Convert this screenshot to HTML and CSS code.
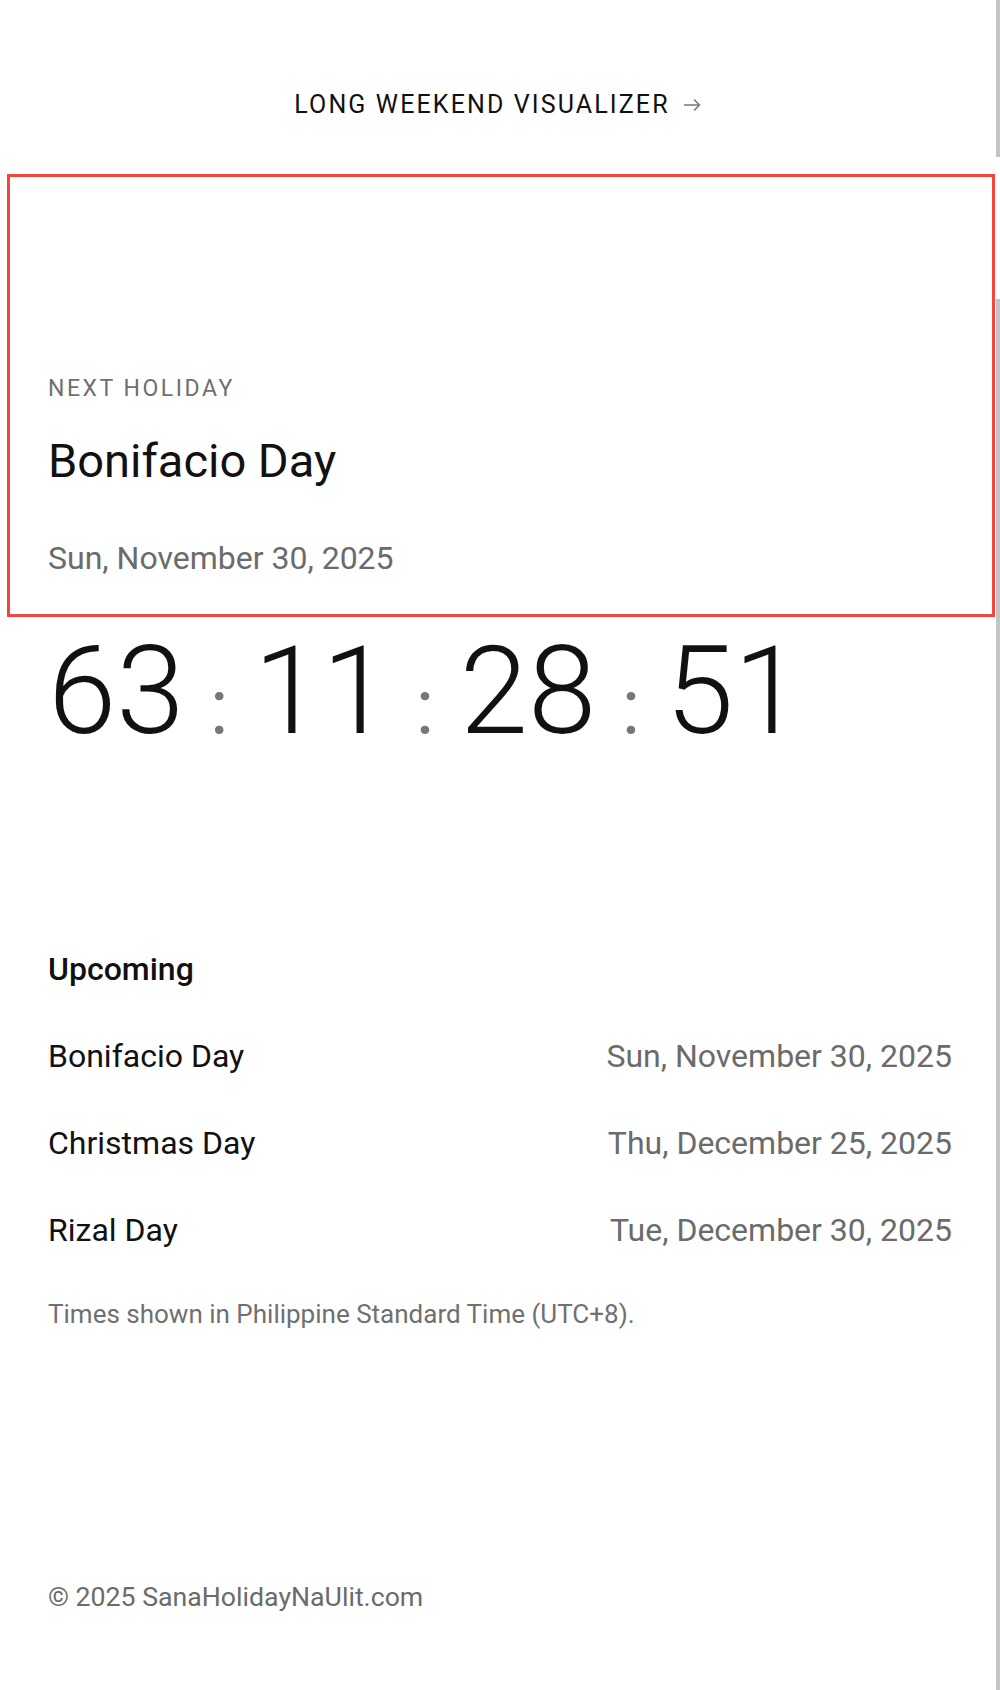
FILE: index.html
```html
<!DOCTYPE html>
<html lang="en">
<head>
<meta charset="utf-8">
<title>Sana Holiday Na Ulit</title>
<link rel="stylesheet" href="styles.css">
</head>
<body>
<div class="edge edge-top"></div>
<div class="edge edge-bottom"></div>
<div class="page">
  <header class="header">
    <a class="visualizer-link" href="#">LONG WEEKEND VISUALIZER
      <svg class="arrow" width="18" height="14" viewBox="0 0 18 14" aria-hidden="true"><path d="M1 7H16.5M11 1.5L16.5 7L11 12.5" fill="none" stroke="#777" stroke-width="1.5"/></svg>
    </a>
  </header>
  <section class="hero">
    <div class="eyebrow">NEXT HOLIDAY</div>
    <h1 class="hero-title">Bonifacio Day</h1>
    <div class="hero-date">Sun, November 30, 2025</div>
  </section>
  <div class="countdown">
    <span class="num">63</span><span class="sep">:</span><span class="num">11</span><span class="sep">:</span><span class="num">28</span><span class="sep">:</span><span class="num">51</span>
  </div>
  <section class="upcoming">
    <h2 class="upcoming-title">Upcoming</h2>
    <ul class="list">
      <li class="row"><span class="name">Bonifacio Day</span><span class="date">Sun, November 30, 2025</span></li>
      <li class="row"><span class="name">Christmas Day</span><span class="date">Thu, December 25, 2025</span></li>
      <li class="row"><span class="name">Rizal Day</span><span class="date">Tue, December 30, 2025</span></li>
    </ul>
    <p class="note">Times shown in Philippine Standard Time (UTC+8).</p>
  </section>
  <footer class="footer">© 2025 SanaHolidayNaUlit.com</footer>
</div>
</body>
</html>
```

FILE: styles.css
```css
html, body {
  margin: 0;
  padding: 0;
  background: #fff;
}
body {
  font-family: Roboto, "Liberation Sans", Arial, sans-serif;
  color: #111;
  min-height: 1690px;
  position: relative;
}
.edge {
  position: absolute;
  right: 0;
  width: 4px;
  background: #c4c4c4;
}
.edge-top { top: 0; height: 157px; }
.edge-bottom { top: 299px; bottom: 0; }

.page {
  padding: 0 48px;
}
.header {
  padding-top: 91px;
  height: 66px;
  display: flex;
  justify-content: center;
  align-items: flex-start;
}
.visualizer-link {
  display: flex;
  align-items: center;
  gap: 13px;
  padding-right: 5px;
  font-size: 25px;
  line-height: 28px;
  letter-spacing: 0.085em;
  color: #111;
  text-decoration: none;
}
.arrow { display: block; }

.hero {
  margin: 17px -43px 0 -41px;
  border: 3px solid #f5443a;
  padding: 198px 40px 36px 38px;
}
.eyebrow {
  font-size: 23px;
  line-height: 28px;
  letter-spacing: 0.11em;
  color: #6f6f6f;
}
.hero-title {
  margin: 30px 0 0;
  font-size: 47px;
  line-height: 56px;
  font-weight: 400;
  color: #111;
}
.hero-date {
  margin-top: 49px;
  font-size: 32px;
  line-height: 40px;
  color: #6b6b6b;
}

.countdown {
  margin-top: 12px;
  display: flex;
  align-items: baseline;
  height: 124px;
}
.num {
  font-size: 123px;
  line-height: 124px;
  font-weight: 300;
  color: #111;
}
.sep {
  font-size: 76px;
  line-height: 76px;
  font-weight: 400;
  color: #777;
  margin: 0 25.5px;
}

.upcoming {
  margin-top: 196px;
}
.upcoming-title {
  margin: 0;
  font-size: 32px;
  line-height: 40px;
  font-weight: 500;
  color: #111;
}
.list {
  list-style: none;
  margin: 47px 0 0;
  padding: 0;
  display: flex;
  flex-direction: column;
  gap: 47px;
}
.row {
  display: flex;
  justify-content: space-between;
  font-size: 32px;
  line-height: 40px;
}
.name { color: #111; }
.date { color: #6b6b6b; }
.note {
  margin: 48px 0 0;
  font-size: 26px;
  line-height: 32px;
  color: #707070;
}
.footer {
  margin-top: 251px;
  font-size: 26.7px;
  line-height: 32px;
  color: #6b6b6b;
}
```
